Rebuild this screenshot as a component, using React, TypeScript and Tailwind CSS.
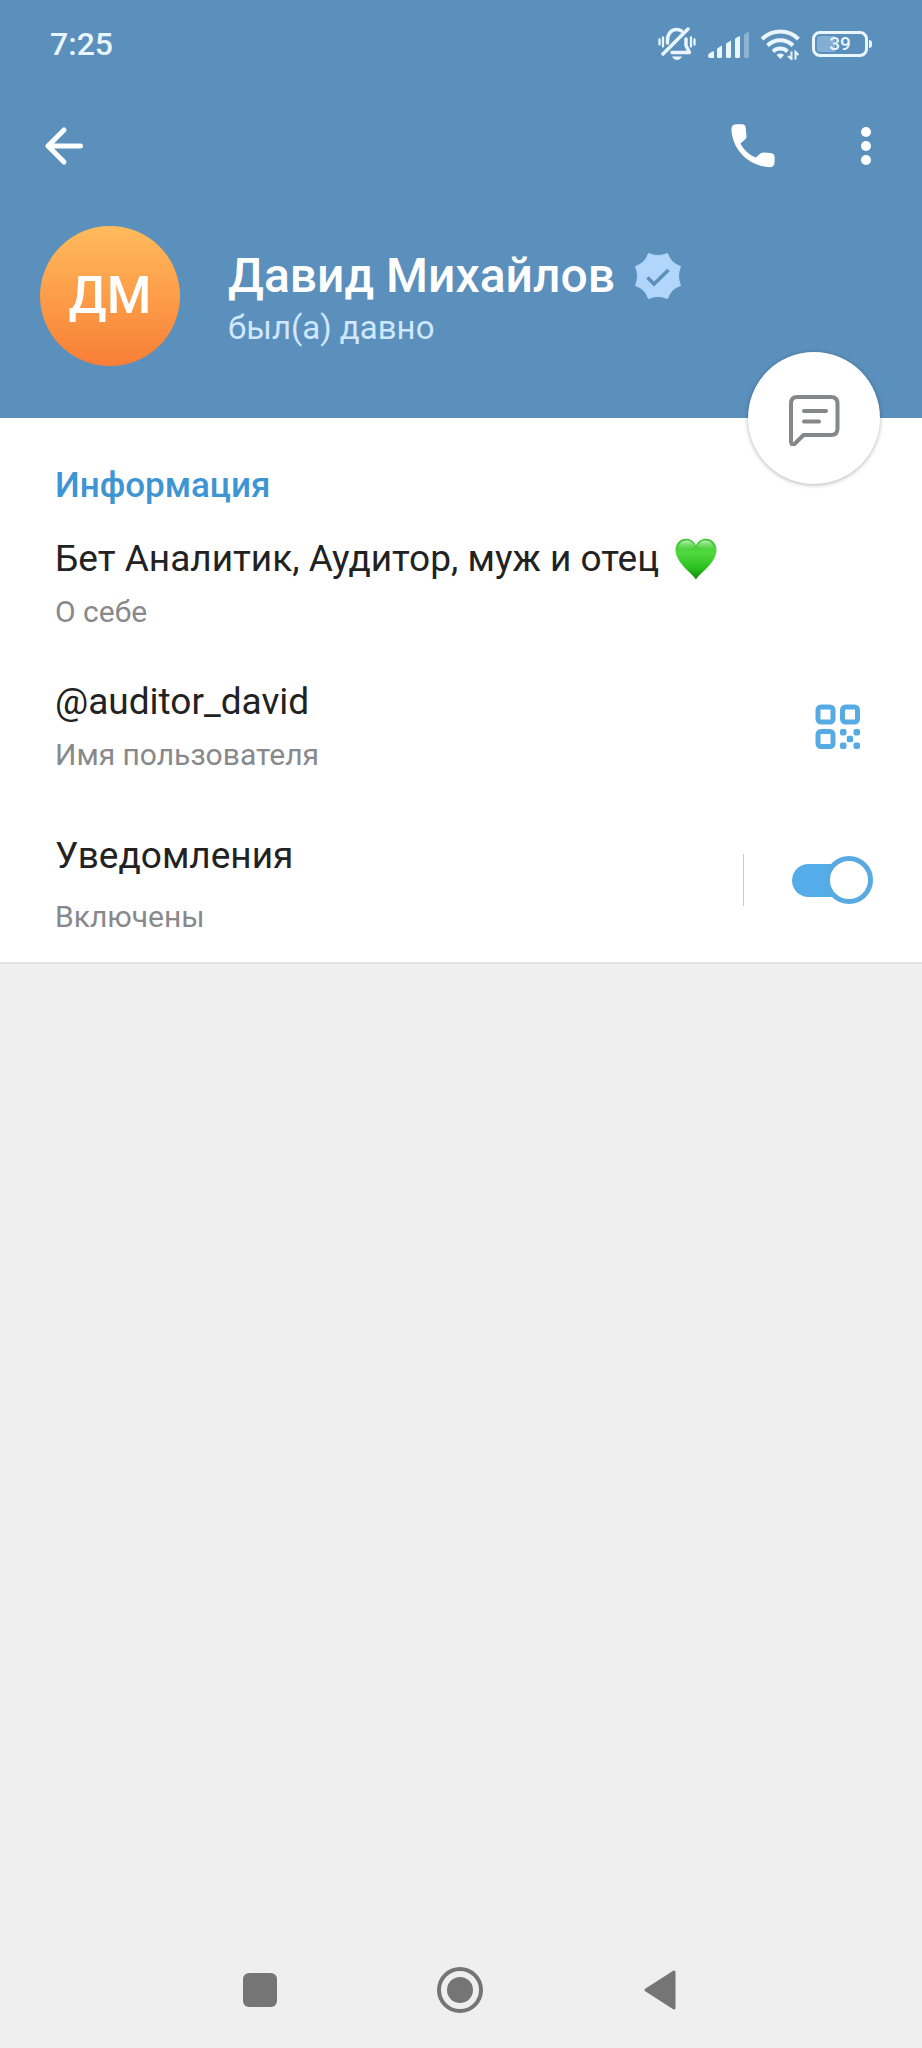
import { useState, type ReactNode } from "react";

function BellOff() {
  return (
    <svg width="38" height="34" viewBox="1 0 38 34" fill="none" stroke="currentColor" strokeWidth="3.500" strokeLinecap="round" aria-hidden="true">
      <path d="M10.500 16V13.500C10.500 7 14 2.500 19.500 2.500C21.500 2.500 23 3 24.500 4M29 12V18.500L32.500 25.500H15" strokeLinejoin="round" />
      <path d="M31 2L6 27" />
      <path d="M15 29.500H25C24 31.800 22.200 33 20 33S16 31.800 15 29.500Z" fill="currentColor" stroke="none" />
      <path d="M2.500 12.500V17.500M6 10.500V19.500M34 10.500V19.500M37.500 12.500V17.500" strokeWidth="2.300" />
    </svg>
  );
}

function Signal() {
  return (
    <svg width="41" height="27" viewBox="0 0 41 27" fill="currentColor" aria-hidden="true">
      <path d="M0 25Q0 22 6 20V27H2Q0 27 0 25Z" />
      <path d="M9 18Q9 17 14 14.500V25.500Q14 27 12.500 27H10.500Q9 27 9 25.500Z" />
      <path d="M18 13Q18 12 23 9.500V25.500Q23 27 21.500 27H19.500Q18 27 18 25.500Z" />
      <path d="M27 8Q27 7 32 5V25.500Q32 27 30.500 27H28.500Q27 27 27 25.500Z" />
      <path d="M36 4Q36 3 41 0.500V25.500Q41 27 39.500 27H37.500Q36 27 36 25.500Z" opacity="0.35" />
    </svg>
  );
}

function Wifi() {
  return (
    <svg width="39" height="31" viewBox="0.500 0 39 31" fill="none" stroke="currentColor" strokeWidth="4" aria-hidden="true">
      <path d="M1.500 10A26 26 0 0 1 38 10" />
      <path d="M7 16.500A18 18 0 0 1 32.500 16.500" />
      <path d="M12.500 22.500A10.500 10.500 0 0 1 27 22.500" />
      <path d="M16 26A5.500 5.500 0 0 1 23.500 26L20 30Z" fill="currentColor" stroke="none" />
      <path d="M31 22.500V30L27.500 27M35 30.500V23L38 26" strokeWidth="2" />
    </svg>
  );
}

function Battery({ level }: { level: number }) {
  return (
    <span className="flex items-center gap-px">
      <span className="grid h-[26px] w-14 place-items-center rounded-lg border-[3px] border-current bg-[linear-gradient(to_right,#85aed4_39%,transparent_39%)] bg-origin-content p-[2px] text-[19px] leading-4 font-medium [background-clip:content-box]">
        {level}
      </span>
      <span className="h-2 w-[3px] rounded-r-sm bg-current" />
    </span>
  );
}

function VerifiedBadge() {
  return (
    <svg width="46" height="46" viewBox="0 0 46 46" role="img" aria-label="Подтверждён">
      <path
        d="M13.500 0.500Q23 4.500 32.500 0.500Q35.800 10.200 45.500 13.500Q41.500 23 45.500 32.500Q35.800 35.800 32.500 45.500Q23 41.500 13.500 45.500Q10.200 35.800 0.500 32.500Q4.500 23 0.500 13.500Q10.200 10.200 13.500 0.500Z"
        fill="#b1d5fb"
        stroke="#b1d5fb"
        strokeLinejoin="round"
      />
      <path d="M12.500 24.500L19 31L33.500 17" fill="none" stroke="#5b8fbc" strokeWidth="3.500" />
    </svg>
  );
}

function GreenHeart() {
  return (
    <svg width="42" height="42" viewBox="0 0 42 42" role="img" aria-label="💚">
      <defs>
        <linearGradient id="heart" x1="0" y1="0" x2="0" y2="1">
          <stop offset="0" stopColor="#3fbf35" />
          <stop offset="0.35" stopColor="#52d840" />
          <stop offset="0.7" stopColor="#2cc320" />
          <stop offset="1" stopColor="#15870f" />
        </linearGradient>
        <linearGradient id="shine" x1="0" y1="0" x2="0" y2="1">
          <stop offset="0" stopColor="#d0f8c8" stopOpacity="0.85" />
          <stop offset="1" stopColor="#8bed7c" stopOpacity="0" />
        </linearGradient>
      </defs>
      <path
        d="M21 41.500C18 36 1 25 0.500 12.500C0.300 5.500 5 0.700 11 0.700C15.500 0.700 19 3 21 7.500C23 3 26.500 0.700 31 0.700C37 0.700 41.700 5.500 41.500 12.500C41 25 24 36 21 41.500Z"
        fill="url(#heart)"
      />
      <path d="M3 11C3.500 5.500 7 2.500 11.500 2.500C16 2.500 18.500 5 19.500 9C16 12 7 13 3 11Z" fill="url(#shine)" />
      <path d="M39 11C38.500 5.500 35 2.500 30.500 2.500C26 2.500 23.500 5 22.500 9C26 12 35 13 39 11Z" fill="url(#shine)" />
    </svg>
  );
}

function QrIcon() {
  return (
    <svg width="46" height="46" viewBox="0 0 46 46" fill="#56abe4" aria-hidden="true">
      <g fill="none" stroke="#56abe4" strokeWidth="5">
        <rect x="3" y="3" width="15" height="15" rx="3" />
        <rect x="27.500" y="3" width="15" height="15" rx="3" />
        <rect x="3" y="27.500" width="15" height="15" rx="3" />
      </g>
      <rect x="25" y="25" width="6.500" height="6.500" rx="2" />
      <rect x="38.500" y="25" width="6.500" height="6.500" rx="2" />
      <rect x="31.700" y="31.700" width="6.500" height="6.500" rx="2" />
      <rect x="25" y="38.500" width="6.500" height="6.500" rx="2" />
      <rect x="38.500" y="38.500" width="6.500" height="6.500" rx="2" />
    </svg>
  );
}

function InfoText({ value, label }: { value: ReactNode; label: string }) {
  return (
    <div className="flex flex-col gap-2">
      <p className="flex items-center gap-4 text-[37px] leading-[48px] text-[#222]">{value}</p>
      <p className="text-[30px] leading-[42px] text-[#87898c]">{label}</p>
    </div>
  );
}

export default function App() {
  const [enabled, setEnabled] = useState(true);

  return (
    <div className="flex min-h-screen flex-col bg-[#efefef] font-[Roboto,'Noto_Sans',sans-serif]">
      <header className="relative bg-[#5b8fbc] pb-[52px] text-white">
        <div className="flex h-[88px] items-center justify-between px-[50px] text-[#eaf6ff]">
          <span className="text-[32px] leading-10 font-medium">7:25</span>
          <div className="flex items-center gap-3">
            <BellOff />
            <Signal />
            <Wifi />
            <Battery level={39} />
          </div>
        </div>

        <div className="flex h-[116px] items-center pr-[26px] pl-[34px]">
          <button type="button" aria-label="Назад" className="grid size-[60px] place-items-center">
            <svg width="40" height="40" viewBox="0 0 40 40" fill="none" stroke="currentColor" strokeWidth="5" strokeLinecap="round" strokeLinejoin="round">
              <path d="M36.500 20H4M20 4L4 20L20 36" />
            </svg>
          </button>
          <button type="button" aria-label="Позвонить" className="mr-[53px] ml-auto grid size-[60px] place-items-center">
            <svg width="44" height="44" viewBox="0 0 44 44" fill="currentColor">
              <path d="M5.500 0.300H11Q14.500 0.300 14.700 4L15.500 12Q15.700 14 14 15.500L9.500 19.500C12.500 25.500 18.500 31.500 25 33.500L28 30.500Q30 28.500 32.500 28.500L39.500 29Q43.600 29.500 43.600 33V38Q43.600 43.300 38.500 43.300C16 41.500 1.800 25 0.400 6Q0.200 0.300 5.500 0.300Z" />
            </svg>
          </button>
          <button type="button" aria-label="Ещё" className="grid size-[60px] place-items-center">
            <svg width="10" height="40" viewBox="0 0 10 40" fill="currentColor">
              <circle cx="5" cy="6" r="5" />
              <circle cx="5" cy="20" r="5" />
              <circle cx="5" cy="34" r="5" />
            </svg>
          </button>
        </div>

        <div className="flex items-start gap-12 pt-[22px] pl-10">
          <div className="grid size-[140px] shrink-0 place-items-center rounded-full bg-linear-to-b from-[#ffbb5c] to-[#f87e35] text-[51px] font-medium">
            ДМ
          </div>
          <div className="pt-5">
            <h1 className="flex items-center gap-5 text-[48px] leading-[60px] font-medium">
              Давид Михайлов
              <VerifiedBadge />
            </h1>
            <p className="text-[33px] leading-[44px] text-[#cfe8ff]">был(а) давно</p>
          </div>
        </div>

        <button
          type="button"
          aria-label="Написать сообщение"
          className="absolute right-[42px] bottom-0 grid size-[132px] translate-y-1/2 place-items-center rounded-full bg-white text-[#85888b] shadow-[0_1px_4px_rgba(0,0,0,0.3)]"
        >
          <svg width="52" height="52" viewBox="0 0 52 52" fill="none" stroke="currentColor" strokeWidth="4" strokeLinecap="round" strokeLinejoin="round" className="mt-1">
            <path d="M9 3H43Q49.500 3 49.500 9.500V34.500Q49.500 41 43 41H15.500L6.500 50Q3 52 3 47.500V9.500Q3 3 9 3Z" />
            <path d="M16 17H38M16 27.500H31" />
          </svg>
        </button>
      </header>

      <main className="border-b-2 border-[#e2e2e2] bg-white pt-11 pl-[55px]">
        <h2 className="mb-[25px] text-[35px] leading-[48px] font-medium text-[#3d95d4]">Информация</h2>
        <InfoText
          value={
            <>
              Бет Аналитик, Аудитор, муж и отец
              <GreenHeart />
            </>
          }
          label="О себе"
        />
        <div className="mt-[45px] flex items-center justify-between pr-[61px]">
          <InfoText value="@auditor_david" label="Имя пользователя" />
          <button type="button" aria-label="QR-код">
            <QrIcon />
          </button>
        </div>
        <div className="mt-[22px] flex items-center pr-[49px]">
          <div className="flex grow flex-col gap-4 pt-[34px] pb-6">
            <label htmlFor="notifications" className="text-[37px] leading-[48px] text-[#222]">
              Уведомления
            </label>
            <p className="text-[30px] leading-[42px] text-[#87898c]">{enabled ? "Включены" : "Выключены"}</p>
          </div>
          <span className="mr-12 h-[52px] w-px bg-[#c8c8c8]" />
          <label className="relative flex cursor-pointer items-center">
            <input
              id="notifications"
              type="checkbox"
              role="switch"
              aria-label="Уведомления"
              checked={enabled}
              onChange={(event) => setEnabled(event.target.checked)}
              className="peer sr-only"
            />
            <span className="h-[33px] w-14 rounded-l-full bg-[#54ace9]" />
            <span className="-ml-[23px] size-[48px] rounded-full border-[5px] border-[#5aaae2] bg-white" />
          </label>
        </div>
      </main>

      <nav className="mt-auto flex h-[116px] items-center justify-center gap-[154px] pr-0.5 text-[#757575]">
        <button type="button" aria-label="Недавние" className="grid size-[46px] place-items-center">
          <span className="size-[34px] rounded-md bg-current" />
        </button>
        <button type="button" aria-label="Домой" className="grid size-[46px] place-items-center rounded-full border-4 border-current">
          <span className="size-[26px] rounded-full bg-current" />
        </button>
        <button type="button" aria-label="Назад" className="grid size-[46px] place-items-center">
          <svg width="32" height="40" viewBox="0 0 32 40" fill="currentColor" stroke="currentColor" strokeWidth="3" strokeLinejoin="round">
            <path d="M2 20L30 2V38Z" />
          </svg>
        </button>
      </nav>
    </div>
  );
}
